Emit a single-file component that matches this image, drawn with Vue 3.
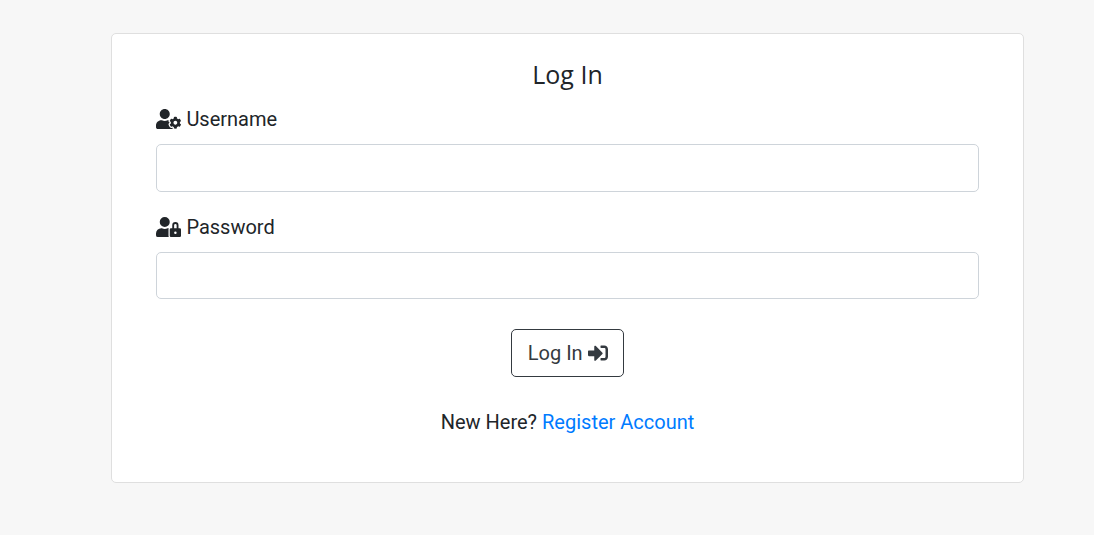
<script setup>
import { ref } from 'vue'

const username = ref('')
const password = ref('')
</script>

<template>
  <main class="page">
    <form class="card" @submit.prevent>
      <h1 class="title">Log In</h1>

      <div class="field">
        <label class="label" for="username">
          <svg class="icon wide" viewBox="0 0 640 512" aria-hidden="true">
            <path d="M610.5 373.3c2.6-14.1 2.6-28.5 0-42.6l25.8-14.9c3-1.7 4.3-5.2 3.3-8.5-6.7-21.6-18.2-41.2-33.2-57.4-2.3-2.5-6-3.1-9-1.4l-25.8 14.9c-10.9-9.3-23.4-16.5-36.9-21.3v-29.8c0-3.4-2.4-6.4-5.7-7.1-22.3-5-45-4.8-66.2 0-3.3.7-5.7 3.7-5.7 7.1v29.8c-13.5 4.8-26 12-36.9 21.3l-25.8-14.9c-2.9-1.7-6.7-1.1-9 1.4-15 16.2-26.5 35.8-33.2 57.4-1 3.3.4 6.8 3.3 8.5l25.8 14.9c-2.6 14.1-2.6 28.5 0 42.6l-25.8 14.9c-3 1.7-4.3 5.2-3.3 8.5 6.7 21.6 18.2 41.1 33.2 57.4 2.3 2.5 6 3.1 9 1.4l25.8-14.9c10.9 9.3 23.4 16.5 36.9 21.3v29.8c0 3.4 2.4 6.4 5.7 7.1 22.3 5 45 4.8 66.2 0 3.3-.7 5.7-3.7 5.7-7.1v-29.8c13.5-4.8 26-12 36.9-21.3l25.8 14.9c2.9 1.7 6.7 1.1 9-1.4 15-16.2 26.5-35.8 33.2-57.4 1-3.3-.4-6.8-3.3-8.5l-25.8-14.9zM496 400.5c-26.8 0-48.5-21.8-48.5-48.5s21.8-48.5 48.5-48.5 48.5 21.8 48.5 48.5-21.7 48.5-48.5 48.5zM224 256c70.7 0 128-57.3 128-128S294.7 0 224 0 96 57.3 96 128s57.3 128 128 128zm201.2 226.5c-2.3-1.2-4.6-2.6-6.8-3.9l-7.9 4.6c-6 3.4-12.8 5.3-19.6 5.3-10.9 0-21.4-4.6-28.9-12.6-18.3-19.8-32.3-43.9-40.2-69.6-5.5-17.7 1.9-36.4 17.9-45.7l7.9-4.6c-.1-2.6-.1-5.2 0-7.8l-7.9-4.6c-16-9.2-23.4-28-17.9-45.7.9-2.9 2.2-5.8 3.2-8.7-3.8-.3-7.5-1.2-11.4-1.2h-16.7c-22.2 10.2-46.9 16-72.9 16s-50.6-5.8-72.9-16h-16.7C60.2 288 0 348.2 0 422.4V464c0 26.5 21.5 48 48 48h352c10.1 0 19.5-3.2 27.2-8.5-1.2-3.8-2-7.7-2-11.8v-9.2z" />
          </svg>
          <span>Username</span>
        </label>
        <input id="username" v-model="username" class="input" type="text" />
      </div>

      <div class="field">
        <label class="label" for="password">
          <svg class="icon wide" viewBox="0 0 640 512" aria-hidden="true">
            <path d="M224 256A128 128 0 1 0 96 128a128 128 0 0 0 128 128zm96 64a63.08 63.08 0 0 1 8.1-30.5c-4.8-.5-9.5-1.5-14.5-1.5h-16.7a174.08 174.08 0 0 1-145.8 0h-16.7A134.43 134.43 0 0 0 0 422.4V464a48 48 0 0 0 48 48h280.9a63.54 63.54 0 0 1-8.9-32zm288-32h-32v-80a80 80 0 0 0-160 0v80h-32a32 32 0 0 0-32 32v160a32 32 0 0 0 32 32h224a32 32 0 0 0 32-32V320a32 32 0 0 0-32-32zM496 432a32 32 0 1 1 32-32 32 32 0 0 1-32 32zm32-144h-64v-80a32 32 0 0 1 64 0z" />
          </svg>
          <span>Password</span>
        </label>
        <input id="password" v-model="password" class="input short" type="password" />
      </div>

      <button class="submit" type="submit">
        <span>Log In</span>
        <svg class="icon" viewBox="0 0 512 512" aria-hidden="true">
          <path d="M416 448h-84c-6.6 0-12-5.4-12-12v-40c0-6.6 5.4-12 12-12h84c17.7 0 32-14.3 32-32V160c0-17.7-14.3-32-32-32h-84c-6.6 0-12-5.4-12-12V76c0-6.6 5.4-12 12-12h84c53 0 96 43 96 96v192c0 53-43 96-96 96zm-47-201L201 79c-15-15-41-4.5-41 17v96H24c-13.3 0-24 10.7-24 24v96c0 13.3 10.7 24 24 24h136v96c0 21.5 26 32 41 17l168-168c9.3-9.4 9.3-24.6 0-34z" />
        </svg>
      </button>

      <p class="register">New Here? <a class="link" href="#">Register Account</a></p>
    </form>
  </main>
</template>

<style>
body {
  background: #f7f7f7;
}
</style>

<style scoped>
.page {
  box-sizing: border-box;
  height: 535px;
  padding: 33px 70px 0 111px;
  font-family: Roboto, "Liberation Sans", sans-serif;
  font-size: 20px;
  font-weight: 400;
  line-height: 30px;
  color: #212529;
}

.card {
  box-sizing: border-box;
  height: 450px;
  display: flex;
  flex-direction: column;
  align-items: center;
  padding: 25px 44px 0;
  background: #fff;
  border: 1px solid #dfdfdf;
  border-radius: 5px;
}

.title {
  margin: 0 0 15px;
  font-family: "Open Sans", sans-serif;
  font-size: 25px;
  font-weight: 400;
  line-height: 30px;
}

.field {
  align-self: stretch;
  margin-bottom: 20px;
}

.label {
  display: flex;
  align-items: center;
  gap: 5px;
  margin-bottom: 10px;
  padding-left: 0.4px;
}

.icon {
  width: 20px;
  height: 20px;
  fill: currentColor;
}

.wide {
  width: 25px;
}

.input {
  display: block;
  box-sizing: border-box;
  width: 100%;
  height: 48px;
  padding: 7px 15px;
  font: inherit;
  color: #495057;
  background: #fff;
  border: 1px solid #ced4da;
  border-radius: 5px;
  outline: none;
}

.short {
  height: 47px;
}

.submit {
  box-sizing: border-box;
  display: flex;
  align-items: center;
  justify-content: center;
  gap: 5.5px;
  width: 113px;
  height: 48px;
  margin-top: 10px;
  padding: 0 0 0 1px;
  font: inherit;
  color: #343a40;
  background: #fff;
  border: 1px solid #343a40;
  border-radius: 5px;
}

.register {
  margin: 30px 0 0;
}

.link {
  color: #007bff;
  text-decoration: none;
}
</style>
